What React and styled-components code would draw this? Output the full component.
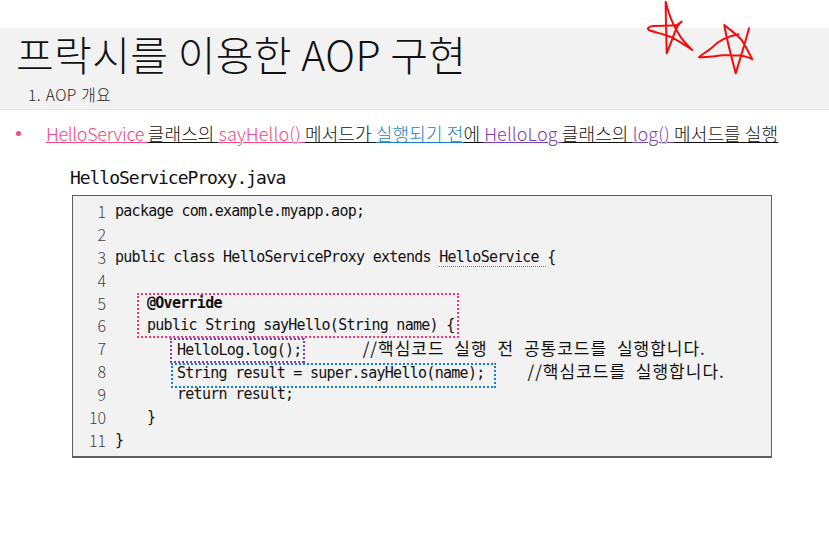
import React from "react";
import styled, { createGlobalStyle } from "styled-components";

const Global = createGlobalStyle`
  html, body { margin: 0; padding: 0; background: #fff; }
  body { width: 829px; height: 553px; overflow: hidden; }
`;
const sans = `"Noto Sans CJK KR", "Noto Sans", sans-serif`;
const mono = `"DejaVu Sans Mono", "Noto Sans CJK KR", monospace`;

const Page = styled.div`
  position: relative;
  width: 829px;
  height: 553px;
  padding-top: 28px;
  box-sizing: border-box;
  overflow: hidden;
  background: #fff;
`;
const Header = styled.header`
  height: 82px;
  box-sizing: border-box;
  background: #f2f2f2;
  border-bottom: 1px solid #e4e4e4;
  padding-left: 16px;
`;
const Title = styled.h1`
  margin: 0;
  font: 300 41px/50px ${sans};
  letter-spacing: 0.35px;
  color: #111;
`;
const Subtitle = styled.div`
  margin: 6px 0 0 12px;
  font: 300 15.5px/20px ${sans};
  letter-spacing: 0.4px;
  word-spacing: 1px;
  color: #222;
`;
const BulletRow = styled.div`
  display: flex;
  align-items: center;
  height: 24px;
  margin: 11px 0 0 16px;
`;
const Dot = styled.span`
  width: 5px;
  height: 5px;
  border-radius: 50%;
  background: #f24a80;
  margin-right: 25px;
`;
const Sentence = styled.p`
  margin: 0;
  font: 300 18px/24px ${sans};
  letter-spacing: 0.13px;
  color: #111;
  white-space: pre;
  text-decoration: underline;
  text-underline-offset: 1px;
  text-decoration-thickness: 1px;
`;
const Mark = styled.span`
  color: ${(p) => p.$color};
  letter-spacing: ${(p) => (p.$tight ? "-0.3px" : "inherit")};
  text-decoration: underline;
  text-decoration-color: ${(p) => p.$color};
  text-underline-offset: 1px;
  text-decoration-thickness: 1px;
`;
const FileName = styled.div`
  margin: 22px 0 0 70px;
  font: 400 18px/22px ${mono};
  letter-spacing: -1.05px;
  color: #111;
`;
const CodeBox = styled.div`
  position: relative;
  margin: 6px 0 0 72px;
  width: 700px;
  height: 263px;
  box-sizing: border-box;
  background: #f2f2f2;
  border: 1px solid #5e5e5e;
  border-bottom-width: 2px;
  padding-top: 4px;
`;
const Row = styled.div`
  display: flex;
  height: 22.9px;
  font: 400 15px/22.9px ${mono};
  letter-spacing: -0.72px;
  color: #111;
  white-space: pre;
`;
const LineNo = styled.span`
  width: 33px;
  flex: none;
  text-align: right;
  letter-spacing: 0;
  color: #444;
  font-weight: 300;
  font-family: ${sans};
  font-size: 16px;
`;
const Code = styled.span`
  margin-left: 9px;
  padding-left: ${(p) => p.$indent || 0}px;
  font-weight: ${(p) => (p.$bold ? 700 : 400)};
`;
const Comment = styled.span`
  margin-left: ${(p) => p.$gap}px;
  font-family: ${sans};
  font-size: 17px;
  letter-spacing: 1px;
  word-spacing: 5px;
`;
const Squiggle = styled.span`
  padding-bottom: 1px;
  background: repeating-linear-gradient(90deg, #e8306a 0 1px, transparent 1px 2px) left bottom / 100% 1px no-repeat;
`;
const dots = (c, dir) =>
  `repeating-linear-gradient(${dir}, ${c} 0 2px, transparent 2px 4px)`;
const Outline = styled.div`
  position: absolute;
  left: ${(p) => p.$x}px;
  top: ${(p) => p.$y}px;
  width: ${(p) => p.$w}px;
  height: ${(p) => p.$h}px;
  background:
    ${(p) => dots(p.$color, "90deg")} left top / 100% 2px no-repeat,
    ${(p) => dots(p.$color, "90deg")} left bottom / 100% 2px no-repeat,
    ${(p) => dots(p.$color, "0deg")} left top / 2px 100% no-repeat,
    ${(p) => dots(p.$color, "0deg")} right top / 2px 100% no-repeat;
`;
const Stars = styled.svg`
  position: absolute;
  left: 635px;
  top: 0;
  width: 130px;
  height: 80px;
  fill: none;
  stroke: #f40d0d;
  stroke-width: 6;
  stroke-linecap: round;
  stroke-linejoin: round;
`;

const lines = [
  { n: 1, c: "package com.example.myapp.aop;" },
  { n: 2, c: "" },
  { n: 3, c: <>public class HelloServiceProxy extends <Squiggle>HelloService </Squiggle>{"{"}</> },
  { n: 4, c: "" },
  { n: 5, c: "@Override", bold: true, indent: 32 },
  { n: 6, c: "public String sayHello(String name) {", indent: 32 },
  { n: 7, c: <>HelloLog.log();<Comment $gap={61}>//핵심코드 실행 전 공통코드를 실행합니다.</Comment></>, indent: 62 },
  { n: 8, c: <>String result = super.sayHello(name);<Comment $gap={43}>//핵심코드를 실행합니다.</Comment></>, indent: 62 },
  { n: 9, c: "return result;", indent: 62 },
  { n: 10, c: "}", indent: 32 },
  { n: 11, c: "}" },
];

export default function App() {
  return (
    <Page>
      <Global />
      <Header>
        <Title>프락시를 이용한 AOP 구현</Title>
        <Subtitle>1. AOP 개요</Subtitle>
      </Header>
      <BulletRow>
        <Dot />
        <Sentence>
          <Mark $color="#f24a80" $tight>HelloService </Mark>클래스의 <Mark $color="#f24a80">sayHello() </Mark>메서드가 <Mark $color="#1a7fc4">실행되기 전</Mark>에 <Mark $color="#7a3fb0">HelloLog </Mark>클래스의 <Mark $color="#7a3fb0">log() </Mark>메서드를 실행
        </Sentence>
      </BulletRow>
      <FileName>HelloServiceProxy.java</FileName>
      <CodeBox>
        {lines.map((l) => (
          <Row key={l.n}>
            <LineNo>{l.n}</LineNo>
            <Code $bold={l.bold} $indent={l.indent}>{l.c}</Code>
          </Row>
        ))}
        <Outline $x={64} $y={97} $w={322} $h={45} $color="#f0397c" />
        <Outline $x={97} $y={142} $w={135} $h={25} $color="#7a3fb0" />
        <Outline $x={98} $y={167} $w={325} $h={25} $color="#1a7fc4" />
      </CodeBox>
      <Stars viewBox="0 0 390 240">
        <path d="M95 160 C94 100 92 50 92 5 C100 40 115 75 130 100 C140 118 152 132 172 150 C150 135 135 125 110 112 C90 102 60 98 42 90 C35 85 40 80 55 78 C80 76 105 78 125 75 C132 72 136 68 140 65 C130 72 125 82 120 95 C112 118 103 140 95 160" />
        <path d="M342 85 C330 130 315 178 302 220 C292 180 275 120 268 75 C285 90 305 103 320 120 C332 140 342 158 352 178 C330 165 300 165 265 166 C240 168 215 172 192 172 C198 163 215 158 232 142 C250 122 275 110 310 103" />
      </Stars>
    </Page>
  );
}
